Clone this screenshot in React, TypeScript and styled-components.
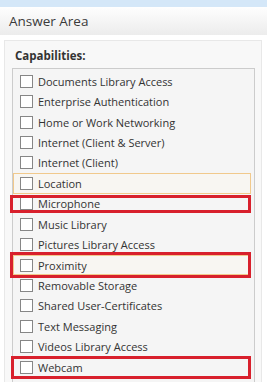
import React from "react";
import styled, { createGlobalStyle } from "styled-components";

const Global = createGlobalStyle`
  html, body { margin: 0; padding: 0; background: #ffffff; }
  body { font-family: "Open Sans", "Noto Sans", sans-serif; color: #333; overflow: hidden; }
`;

const Page = styled.div`
  width: 267px;
  height: 382px;
  display: flex;
  flex-direction: column;
  overflow: hidden;
`;

const TopBar = styled.div`
  height: 7px;
  background: #d4e7f8;
  flex: none;
`;

const Header = styled.div`
  height: 28px;
  flex: none;
  display: flex;
  align-items: center;
  padding-left: 9px;
  font-size: 13.5px;
  color: #3a3a3a;
  background: linear-gradient(#fefefe, #ececec);
`;

const Panel = styled.div`
  margin: 5px 5px 0 4px;
  flex: 1;
  border: 1px solid #e8e8e8;
  border-bottom: none;
  background: #f8f8f8;
  padding: 6px 6px 0 7px;
  display: flex;
  flex-direction: column;
`;

const Title = styled.div`
  font-size: 11.5px;
  font-weight: 700;
  color: #333;
  padding-left: 3px;
  height: 18px;
  line-height: 18px;
`;

const ListBox = styled.div`
  margin-top: 3px;
  flex: 1;
  border: 1px solid #cccccc;
  border-bottom: none;
  background: #f5f5f5;
  padding: 2px 3px 0 0;
  display: flex;
  flex-direction: column;
`;

const Row = styled.div<{ $tan?: boolean }>`
  position: relative;
  height: 20.43px;
  flex: none;
  box-sizing: border-box;
  display: flex;
  align-items: center;
  gap: 5px;
  padding-left: 6px;
  font-size: 11px;
  color: #333;
  border: 1px solid ${(p) => (p.$tan ? "#f1c98c" : "transparent")};
  background: ${(p) => (p.$tan ? "#f8f6f2" : "transparent")};
`;

const Box = styled.span`
  width: 13px;
  height: 13px;
  box-sizing: border-box;
  border: 1px solid #868686;
  background: #ffffff;
  flex: none;
`;

const RedMark = styled.span<{ $t: number; $b: number; $l: number; $r: number }>`
  position: absolute;
  top: ${(p) => p.$t}px;
  bottom: ${(p) => p.$b}px;
  left: ${(p) => p.$l}px;
  right: ${(p) => p.$r}px;
  border: 3px solid #d8202c;
  pointer-events: none;
`;

type Item = {
  label: string;
  tan?: boolean;
  red?: { t: number; b: number; l: number; r: number };
};

const items: Item[] = [
  { label: "Documents Library Access" },
  { label: "Enterprise Authentication" },
  { label: "Home or Work Networking" },
  { label: "Internet (Client & Server)" },
  { label: "Internet (Client)" },
  { label: "Location", tan: true },
  { label: "Microphone", red: { t: 0, b: 0, l: -4, r: -1 } },
  { label: "Music Library" },
  { label: "Pictures Library Access" },
  { label: "Proximity", tan: true, red: { t: -4, b: -4, l: -4, r: -1 } },
  { label: "Removable Storage" },
  { label: "Shared User-Certificates" },
  { label: "Text Messaging" },
  { label: "Videos Library Access" },
  { label: "Webcam", red: { t: -2, b: -3, l: -3, r: -1 } },
];

export default function App() {
  return (
    <Page>
      <Global />
      <TopBar />
      <Header>Answer Area</Header>
      <Panel>
        <Title>Capabilities:</Title>
        <ListBox>
          {items.map((it) => (
            <Row key={it.label} $tan={it.tan}>
              <Box />
              <span>{it.label}</span>
              {it.red && <RedMark $t={it.red.t} $b={it.red.b} $l={it.red.l} $r={it.red.r} />}
            </Row>
          ))}
        </ListBox>
      </Panel>
    </Page>
  );
}
